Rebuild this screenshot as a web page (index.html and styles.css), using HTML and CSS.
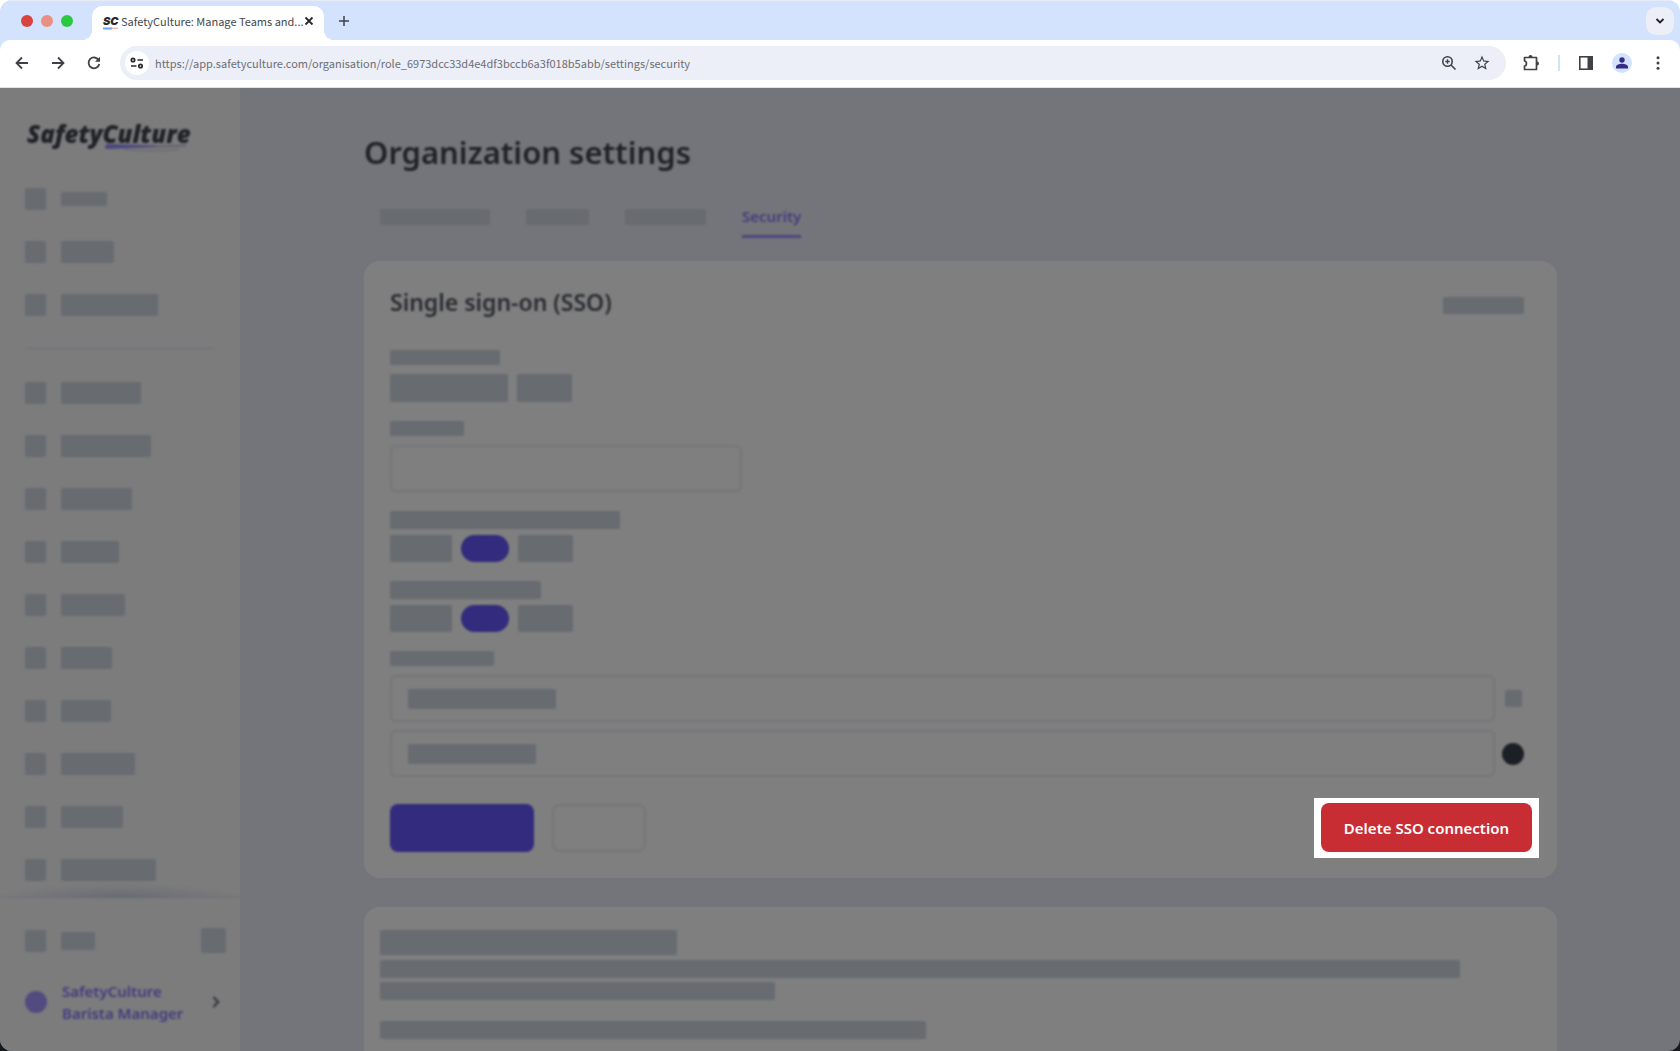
FILE: index.html
```html
<!DOCTYPE html>
<html lang="en">
<head>
    <meta charset="UTF-8">
    <meta name="viewport" content="width=device-width, initial-scale=1.0">
    <title>SafetyCulture: Manage Teams and Organization</title>
    <link rel="stylesheet" href="styles.css">
</head>
<body>
    <div class="window">
        <header class="browser">
            <div class="tab-strip">
                <div class="lights">
                    <span class="light light-close"></span>
                    <span class="light light-min"></span>
                    <span class="light light-max"></span>
                </div>
                <div class="tab">
                    <span class="favicon">SC
                        <svg class="favicon-line" width="16" height="3" viewBox="0 0 16 3"><path d="M0 1.5h9" stroke="#6aa5ee" stroke-width="2"/><path d="M8 1.2h7" stroke="#e99a94" stroke-width="1"/></svg>
                    </span>
                    <span class="tab-title">SafetyCulture: Manage Teams and...</span>
                    <button class="icon-btn" type="button" aria-label="Close tab">
                        <svg width="10" height="10" viewBox="0 0 10 10"><path d="M1.5 1.5l7 7M8.5 1.5l-7 7" stroke="#26282c" stroke-width="1.8"/></svg>
                    </button>
                </div>
                <button class="icon-btn new-tab" type="button" aria-label="New tab">
                    <svg width="12" height="12" viewBox="0 0 12 12"><path d="M6 1v10M1 6h10" stroke="#3f4247" stroke-width="1.5"/></svg>
                </button>
                <button class="icon-btn tab-search" type="button" aria-label="Search tabs">
                    <svg width="10" height="8" viewBox="0 0 10 8"><path d="M1.5 2L5 5.5 8.5 2" fill="none" stroke="#222" stroke-width="1.8"/></svg>
                </button>
            </div>

            <div class="toolbar">
                <div class="nav-buttons">
                    <button class="icon-btn" type="button" aria-label="Back">
                        <svg width="16" height="16" viewBox="0 0 16 16"><path d="M14 8H3M8 2.5L2.5 8 8 13.5" fill="none" stroke="#3f4247" stroke-width="1.8"/></svg>
                    </button>
                    <button class="icon-btn" type="button" aria-label="Forward">
                        <svg width="16" height="16" viewBox="0 0 16 16"><path d="M2 8h11M8 2.5L13.5 8 8 13.5" fill="none" stroke="#3f4247" stroke-width="1.8"/></svg>
                    </button>
                    <button class="icon-btn" type="button" aria-label="Reload">
                        <svg width="16" height="16" viewBox="0 0 16 16"><path d="M12.6 5A5.4 5.4 0 1 0 13.3 9" fill="none" stroke="#3f4247" stroke-width="1.8"/><path d="M14 1.8v5H9z" fill="#3f4247"/></svg>
                    </button>
                </div>
                <div class="omnibox">
                    <span class="site-info">
                        <svg width="14" height="12" viewBox="0 0 14 12" fill="none" stroke="#26282c" stroke-width="1.7"><circle cx="3" cy="3" r="1.7"/><path d="M7.5 3H13M1 9h5.5"/><circle cx="10.5" cy="9" r="1.7"/></svg>
                    </span>
                    <input class="url" type="text" aria-label="Address" value="https://app.safetyculture.com/organisation/role_6973dcc33d4e4df3bccb6a3f018b5abb/settings/security">
                    <button class="icon-btn" type="button" aria-label="Zoom">
                        <svg width="16" height="16" viewBox="0 0 16 16" fill="none" stroke="#3f4247" stroke-width="1.6"><circle cx="6.5" cy="6.5" r="4.7"/><path d="M10 10l4.5 4.5"/><path d="M6.5 4.3v4.4M4.3 6.5h4.4" stroke-width="1.4"/></svg>
                    </button>
                    <button class="icon-btn" type="button" aria-label="Bookmark">
                        <svg width="18" height="18" viewBox="0 0 24 24" fill="#3f4247"><path d="M22 9.24l-7.19-.62L12 2 9.19 8.63 2 9.24l5.46 4.73L5.82 21 12 17.27 18.18 21l-1.63-7.03L22 9.24zM12 15.4l-3.76 2.27 1-4.28-3.32-2.88 4.38-.38L12 6.1l1.71 4.04 4.38.38-3.32 2.88 1 4.28L12 15.4z"/></svg>
                    </button>
                </div>
                <div class="tools">
                    <button class="icon-btn" type="button" aria-label="Extensions">
                        <svg width="18" height="18" viewBox="0 0 18 18"><path d="M2.5 3.5h12v12h-12v-3.300c2.600-.5 2.600-4.900 0-5.400z" fill="none" stroke="#3f4247" stroke-width="1.7" stroke-linejoin="round"/><path d="M6.5 3a2 2 0 0 1 4 0zM15 7.5a2 2 0 0 1 0 4z" fill="#3f4247"/></svg>
                    </button>
                    <span class="separator"></span>
                    <button class="icon-btn" type="button" aria-label="Side panel">
                        <svg width="16" height="16" viewBox="0 0 16 16"><rect x="1.8" y="1.8" width="12.4" height="12.4" fill="none" stroke="#3f4247" stroke-width="1.6"/><path d="M9.5 2H14v12H9.5z" fill="#3f4247"/></svg>
                    </button>
                    <button class="icon-btn avatar" type="button" aria-label="Profile">
                        <svg width="12" height="12" viewBox="0 0 12 12" fill="#332b85"><circle cx="6" cy="3" r="2.7"/><path d="M0 11.5V10c0-2 3.5-3.2 6-3.2S12 8 12 10v1.5z"/></svg>
                    </button>
                    <button class="icon-btn" type="button" aria-label="Menu">
                        <svg width="4" height="14" viewBox="0 0 4 14" fill="#3f4247"><circle cx="2" cy="1.7" r="1.5"/><circle cx="2" cy="7" r="1.5"/><circle cx="2" cy="12.3" r="1.5"/></svg>
                    </button>
                </div>
            </div>
        </header>

        <div class="app">
            <aside class="sidebar">
                <div class="logo blurred">
                    <span>SafetyCulture</span>
                    <svg class="logo-line" width="90" height="9" viewBox="0 0 90 9"><path d="M1 4Q1 1 5 1L52 2.5V4L26 5 4 6Q1 6 1 4z" fill="#4d477f"/><path d="M52 3.5l30-1" stroke="#5c5d66" stroke-width="1.5"/><path d="M20 6.5q30 2 55 0" fill="none" stroke="#6a6b74" stroke-width="1.5"/></svg>
                </div>
                <nav class="blurred">
                    <ul class="menu">
                        <li><span class="sk icon"></span><span class="sk text thin w-46"></span></li>
                        <li><span class="sk icon"></span><span class="sk text w-53"></span></li>
                        <li><span class="sk icon"></span><span class="sk text w-97"></span></li>
                    </ul>
                    <hr class="divider">
                    <ul class="menu">
                        <li><span class="sk icon"></span><span class="sk text w-80"></span></li>
                        <li><span class="sk icon"></span><span class="sk text w-90"></span></li>
                        <li><span class="sk icon"></span><span class="sk text w-71"></span></li>
                        <li><span class="sk icon"></span><span class="sk text w-58"></span></li>
                        <li><span class="sk icon"></span><span class="sk text w-64"></span></li>
                        <li><span class="sk icon"></span><span class="sk text w-51"></span></li>
                        <li><span class="sk icon"></span><span class="sk text w-50"></span></li>
                        <li><span class="sk icon"></span><span class="sk text w-74"></span></li>
                        <li><span class="sk icon"></span><span class="sk text w-62"></span></li>
                        <li><span class="sk icon"></span><span class="sk text w-95"></span></li>
                    </ul>
                </nav>
                <div class="sidebar-footer blurred">
                    <div class="footer-row">
                        <span class="sk icon"></span>
                        <span class="sk text short w-34"></span>
                        <span class="sk collapse"></span>
                    </div>
                    <a class="account" href="#">
                        <span class="account-dot"></span>
                        <span class="account-name">SafetyCulture<br>Barista Manager</span>
                        <svg width="8" height="12" viewBox="0 0 8 12"><path d="M1.5 1L6 6l-4.5 5" fill="none" stroke="#3a3c42" stroke-width="2.5"/></svg>
                    </a>
                </div>
            </aside>

            <main class="main">
                <h1 class="blurred">Organization settings</h1>

                <nav class="tabs blurred">
                    <span class="sk tab-sk w-110"></span>
                    <span class="sk tab-sk w-63"></span>
                    <span class="sk tab-sk w-81"></span>
                    <a class="active" href="#">Security</a>
                </nav>

                <section class="card">
                    <form>
                        <div class="blurred">
                            <div class="card-header">
                                <h2>Single sign-on (SSO)</h2>
                                <span class="sk status w-81"></span>
                            </div>

                            <div class="group">
                                <span class="sk label w-110"></span>
                                <div class="row">
                                    <span class="sk value value-tall w-118"></span>
                                    <span class="sk value value-tall w-55"></span>
                                </div>
                            </div>

                            <div class="group">
                                <label class="sk label w-74" for="name"></label>
                                <div class="field field-short"><input type="text" id="name"></div>
                            </div>

                            <div class="group">
                                <label class="sk label tall w-230" for="toggleOne"></label>
                                <div class="row">
                                    <span class="sk value w-62"></span>
                                    <input class="toggle" type="checkbox" id="toggleOne" checked>
                                    <span class="sk value w-55"></span>
                                </div>
                            </div>

                            <div class="group">
                                <label class="sk label tall w-151" for="toggleTwo"></label>
                                <div class="row">
                                    <span class="sk value w-62"></span>
                                    <input class="toggle" type="checkbox" id="toggleTwo" checked>
                                    <span class="sk value w-55"></span>
                                </div>
                            </div>

                            <div class="group">
                                <label class="sk label w-104" for="domainOne"></label>
                                <div class="domain">
                                    <div class="field">
                                        <span class="sk domain-sk w-148"></span>
                                        <input type="text" id="domainOne">
                                    </div>
                                    <span class="domain-action"><span class="sk remove"></span></span>
                                </div>
                                <div class="domain">
                                    <div class="field">
                                        <span class="sk domain-sk w-128"></span>
                                        <input type="text" aria-label="Domain">
                                    </div>
                                    <button class="domain-action add" type="button" aria-label="Add domain"></button>
                                </div>
                            </div>
                        </div>

                        <div class="actions">
                            <div class="actions-left blurred">
                                <button class="primary" type="submit" aria-label="Save"></button>
                                <button class="secondary" type="button" aria-label="Cancel"></button>
                            </div>
                            <div class="spotlight">
                                <button class="delete" type="button">Delete SSO connection</button>
                            </div>
                        </div>
                    </form>
                </section>

                <section class="card card-text">
                    <div class="blurred">
                        <div class="sk para-title"></div>
                        <div class="sk para para-full"></div>
                        <div class="sk para para-short"></div>
                        <div class="sk para para-half"></div>
                    </div>
                </section>
            </main>
        </div>
    </div>
</body>
</html>
```
FILE: styles.css
```css
* {
    box-sizing: border-box;
}

body {
    margin: 0;
    font-family: "Noto Sans", sans-serif;
    background: linear-gradient(#ffffff 50%, #15181c 50%);
}

button {
    padding: 0;
    border: none;
    background: none;
    font-family: inherit;
    cursor: pointer;
}

a {
    text-decoration: none;
}

.window {
    display: flex;
    flex-direction: column;
    height: 100vh;
    border-radius: 12px;
    overflow: hidden;
}

.blurred {
    filter: blur(1px);
}

/* Browser chrome */

.browser {
    background-color: #d3e2fd;
    border-top: 1px solid #e6ebf5;
}

.tab-strip {
    display: flex;
    align-items: center;
    height: 39px;
    padding: 0 6px 0 21px;
}

.lights {
    display: flex;
    gap: 8px;
    width: 71px;
}

.light {
    width: 12px;
    height: 12px;
    border-radius: 50%;
}

.light-close {
    background-color: #d8433d;
}

.light-min {
    background-color: #e99082;
}

.light-max {
    background-color: #2bc840;
}

.tab {
    position: relative;
    align-self: flex-end;
    display: flex;
    align-items: center;
    width: 232px;
    height: 34px;
    padding: 0 11px 4px;
    border-radius: 10px 10px 0 0;
    background-color: #ffffff;
}

/* curved feet on both sides of the tab */
.tab::before,
.tab::after {
    content: "";
    position: absolute;
    bottom: 0;
    width: 10px;
    height: 10px;
}

.tab::before {
    left: -10px;
    background: radial-gradient(circle at 0 0, #d3e2fd 10px, #ffffff 10px);
}

.tab::after {
    right: -10px;
    background: radial-gradient(circle at 100% 0, #d3e2fd 10px, #ffffff 10px);
}

.favicon {
    position: relative;
    flex: none;
    width: 18px;
    font: italic 900 11px/16px "Inter", sans-serif;
    color: #26282c;
}

.favicon-line {
    position: absolute;
    left: 0;
    bottom: -1px;
}

.tab-title {
    flex: 1;
    font: 11px/16px "Noto Sans CJK SC", sans-serif;
    color: #45474c;
    white-space: nowrap;
}

.icon-btn {
    display: flex;
    align-items: center;
    justify-content: center;
}

.new-tab {
    margin-left: 14px;
}

.tab-search {
    width: 28px;
    height: 28px;
    margin-left: auto;
    border-radius: 10px;
    background-color: #eceef8;
}

.toolbar {
    display: flex;
    align-items: center;
    height: 48px;
    padding: 0 20px 2px 14px;
    border-radius: 10px 10px 0 0;
    border-bottom: 1px solid #e2e2e2;
    background-color: #ffffff;
}

.nav-buttons {
    display: flex;
    gap: 20px;
    width: 106px;
}

.omnibox {
    flex: 1;
    display: flex;
    align-items: center;
    gap: 16px;
    height: 34px;
    padding: 0 15px 0 5px;
    border-radius: 17px;
    background-color: #eceef8;
}

.site-info {
    display: flex;
    align-items: center;
    justify-content: center;
    width: 24px;
    height: 24px;
    border-radius: 50%;
    background-color: #ffffff;
}

.url {
    flex: 1;
    min-width: 0;
    margin-left: -10px;
    padding: 0;
    border: none;
    background: none;
    font: 11px/20px "Noto Sans CJK SC", sans-serif;
    color: #6d6f73;
}

.tools {
    display: flex;
    align-items: center;
    gap: 18px;
    margin-left: 16px;
}

.separator {
    width: 2px;
    height: 16px;
    background-color: #d3e2fd;
}

.avatar {
    width: 20px;
    height: 20px;
    margin: 0 6px 0 0;
    border-radius: 50%;
    background-color: #d3e2fd;
}

/* Page */

.app {
    flex: 1;
    display: flex;
    min-height: 0;
    overflow: hidden;
    background-color: #74757a;
}

.sk {
    display: block;
    flex: none;
    border-radius: 2px;
    background-color: #686b70;
}

.sidebar {
    flex: none;
    width: 240px;
    background-color: #7c7c7d;
    box-shadow: 0 0 2px #797a7c;
}

.logo {
    position: relative;
    height: 84px;
    padding: 30px 0 0 27px;
    font: italic 800 24px/32px "Open Sans", sans-serif;
    color: #202227;
}

.logo-line {
    position: absolute;
    left: 104px;
    top: 55px;
}

.menu {
    margin: 0;
    padding: 0 0 0 25px;
    list-style: none;
}

.menu li {
    display: flex;
    align-items: center;
    gap: 15px;
    height: 53px;
}

.icon {
    width: 21px;
    height: 22px;
}

.text {
    height: 22px;
}

.thin {
    height: 14px;
}

.short {
    height: 18px;
}

.divider {
    height: 1px;
    margin: 17px 26px;
    border: none;
    background-color: #717278;
}

.sidebar-footer {
    position: relative;
    padding: 30px 14px 0 25px;
    border-top: 2px solid #75767a;
}

.sidebar-footer::before {
    content: "";
    position: absolute;
    left: 0;
    right: 0;
    bottom: 100%;
    height: 14px;
    background: radial-gradient(ellipse 50% 100% at 50% 100%, #666a6f, rgba(110, 112, 117, 0.7) 50%, rgba(124, 124, 125, 0));
}

.footer-row,
.account {
    display: flex;
    align-items: center;
    gap: 15px;
}

.collapse {
    width: 25px;
    height: 25px;
    margin-left: auto;
}

.account {
    margin-top: 27px;
    padding-right: 6px;
    font-size: 15px;
    font-weight: 600;
    line-height: 22px;
    color: #423b7e;
}

.account-dot {
    width: 22px;
    height: 22px;
    border-radius: 50%;
    background-color: #514b80;
}

.account-name {
    flex: 1;
    white-space: nowrap;
}

.main {
    flex: 1;
    min-width: 0;
    padding: 42px 123px 0 124px;
}

h1 {
    margin: 0;
    font-size: 31px;
    font-weight: 600;
    line-height: 44px;
    color: #202227;
}

.tabs {
    display: flex;
    align-items: flex-start;
    gap: 36px;
    margin-bottom: 23px;
    padding: 30px 0 0 16px;
}

.tab-sk {
    height: 16px;
    margin-top: 5px;
}

.active {
    padding-bottom: 6px;
    border-bottom: 3px solid #4d477f;
    font-size: 15px;
    font-weight: 600;
    line-height: 25px;
    color: #423b7e;
}

.card {
    margin-bottom: 29px;
    padding: 25px 33px 20px 26px;
    border-radius: 16px;
    background-color: #7f7f7f;
    box-shadow: 0 0 2px #7b7b7d;
}

.card-header {
    display: flex;
    align-items: center;
    justify-content: space-between;
    margin-bottom: 32px;
}

h2 {
    margin: 0;
    font-size: 23px;
    font-weight: 600;
    line-height: 32px;
    color: #2b2d32;
}

.status {
    height: 17px;
    margin-top: 6px;
}

.group {
    margin-bottom: 19px;
}

.label {
    height: 15px;
    margin-bottom: 9px;
}

.tall {
    height: 18px;
    margin-bottom: 6px;
}

.row {
    display: flex;
    align-items: center;
    gap: 9px;
}

.value {
    height: 27px;
}

.value-tall {
    height: 28px;
}

.toggle {
    appearance: none;
    width: 48px;
    height: 27px;
    margin: 0;
    border-radius: 14px;
    background-color: #332b7d;
}

.field {
    flex: 1;
    display: flex;
    align-items: center;
    height: 47px;
    padding: 0 16px;
    border: 2px solid #75767a;
    border-radius: 6px;
}

.field-short {
    max-width: 352px;
}

.field input {
    flex: 1;
    min-width: 0;
    border: none;
    background: none;
}

.domain {
    display: flex;
    align-items: center;
    gap: 7px;
}

.domain + .domain {
    margin-top: 8px;
}

.domain-sk {
    height: 20px;
}

.domain-action {
    display: flex;
    justify-content: center;
    width: 22px;
}

.remove {
    width: 17px;
    height: 17px;
}

.add {
    height: 22px;
    border-radius: 50%;
    background-color: #1c1f25;
}

.actions {
    display: flex;
    align-items: center;
    justify-content: space-between;
    margin: 21px -15px 0 0;
}

.actions-left {
    display: flex;
    gap: 18px;
}

.primary,
.secondary {
    width: 144px;
    height: 48px;
    border-radius: 8px;
    background-color: #332b7d;
}

.secondary {
    width: 94px;
    border: 2px solid #75767a;
    background: none;
}

.spotlight {
    padding: 5px 7px 6px;
    background-color: #ffffff;
}

.delete {
    height: 49px;
    padding: 0 23px;
    border-radius: 8px;
    background-color: #c92d34;
    font-size: 15px;
    font-weight: 600;
    color: #ffffff;
}

.card-text {
    height: 200px;
    padding: 23px 16px;
}

.para-title {
    width: 297px;
    height: 25px;
    margin-bottom: 5px;
}

.para {
    height: 18px;
    margin-bottom: 4px;
}

.para-full {
    width: 93%;
}

.para-short {
    width: 34%;
    margin-bottom: 21px;
}

.para-half {
    width: 47%;
}

/* Placeholder widths */

.w-34 { width: 34px; }
.w-46 { width: 46px; }
.w-50 { width: 50px; }
.w-51 { width: 51px; }
.w-53 { width: 53px; }
.w-55 { width: 55px; }
.w-58 { width: 58px; }
.w-62 { width: 62px; }
.w-63 { width: 63px; }
.w-64 { width: 64px; }
.w-71 { width: 71px; }
.w-74 { width: 74px; }
.w-80 { width: 80px; }
.w-81 { width: 81px; }
.w-90 { width: 90px; }
.w-95 { width: 95px; }
.w-97 { width: 97px; }
.w-104 { width: 104px; }
.w-110 { width: 110px; }
.w-118 { width: 118px; }
.w-128 { width: 128px; }
.w-148 { width: 148px; }
.w-151 { width: 151px; }
.w-230 { width: 230px; }
```
